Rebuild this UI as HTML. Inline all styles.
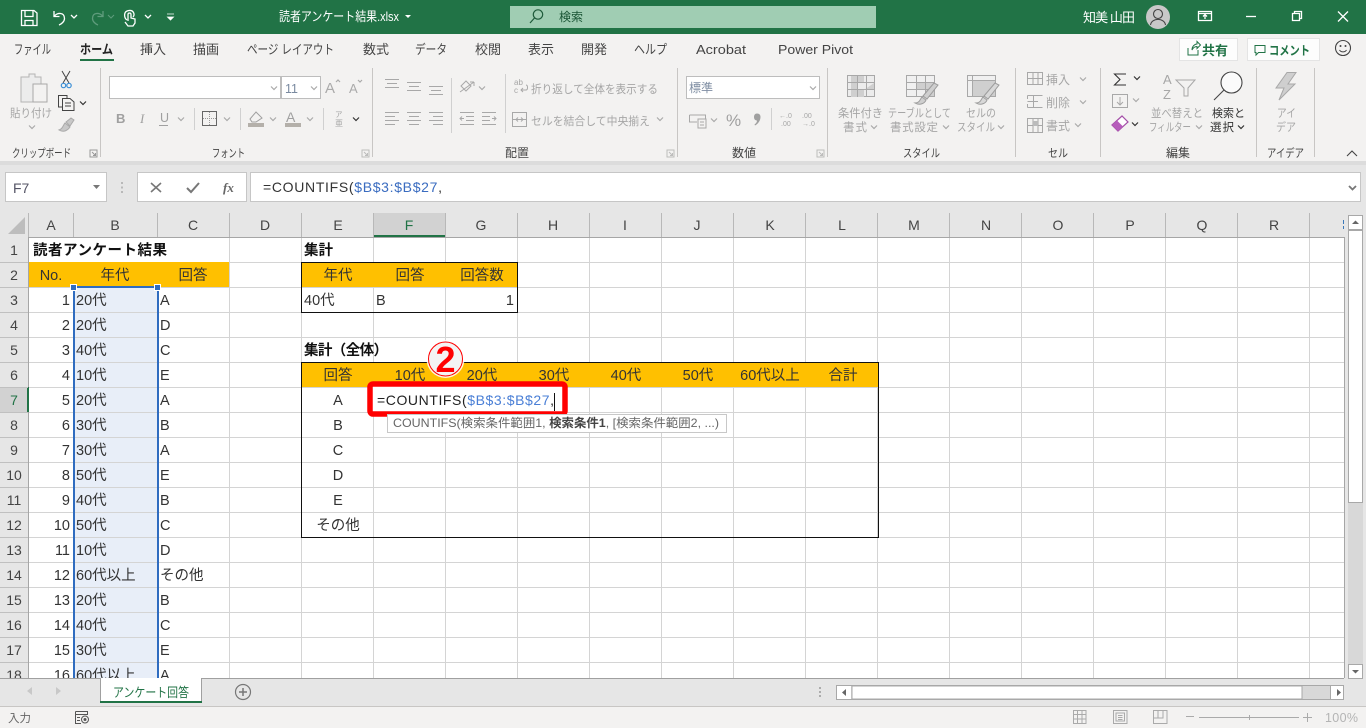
<!DOCTYPE html>
<html lang="ja"><head><meta charset="utf-8"><title>読者アンケート結果.xlsx - Excel</title>
<style>
html,body{margin:0;padding:0;background:#fff;overflow:hidden}
svg{display:block;font-family:"Liberation Sans","Noto Sans CJK JP",sans-serif}
.g{fill:#a6a6a6;font-size:11.5px}
.k{fill:#333;font-size:11.5px}
.tab{fill:#444;font-size:13px}
.lb{fill:#444;font-size:11.5px}
.c{fill:#333;font-size:14.5px}
.m{text-anchor:middle}
.e{text-anchor:end}
.b{font-weight:bold;fill:#111}
.h{fill:#444;font-size:14px;text-anchor:middle}
.i{fill:none;stroke:#a8a8a8;stroke-width:1}
.d{fill:none;stroke:#444;stroke-width:1}
.ch{fill:none;stroke:#aaa;stroke-width:1.2}
.chd{fill:none;stroke:#333;stroke-width:1.2}
.w{fill:none;stroke:#fff;stroke-width:1.3}
</style></head><body>
<svg width="1366" height="728" viewBox="0 0 1366 728" xmlns="http://www.w3.org/2000/svg">
<defs>
<path id="cv" class="ch" d="M-3-1.5 0 1.5 3-1.5"/>
<path id="cd" class="chd" d="M-3-1.5 0 1.5 3-1.5"/>
<path id="lau" d="M0 0H7V7H0ZM2 2 5.5 5.5M5.5 3V5.5H3" fill="none" stroke="#999" stroke-width="1"/>
</defs>
<!-- backgrounds -->
<rect width="1366" height="728" fill="#e6e6e6"/>
<rect y="34" width="1366" height="127" fill="#f3f2f1"/>
<rect y="161" width="1366" height="4" fill="#dcdcdc"/>
<rect width="1366" height="34" fill="#217346"/>

<!-- title bar -->
<path class="w" d="M21.5 10.5H34L37 13V25.5H21.5ZM25 10.5V16.5H33V10.5M25 25.5V20.5H33V25.5"/>
<path class="w" d="M54 11V16.5H59.5M54.5 16C57 12.5 64.5 12 64.5 18.5C64.5 21.5 61.5 24 59 25"/>
<path d="M71 15 74 18 77 15" class="w" stroke-width="1"/>
<path d="M103 11V16.5H97.5M102.5 16C100 12.5 92.5 12 92.5 18.5C92.5 21.5 95.5 24 98 25" fill="none" stroke="#5f9c7c" stroke-width="1.3"/>
<path d="M108 15 111 18 114 15" fill="none" stroke="#5f9c7c"/>
<path class="w" d="M127 20C124 18 123 11 129 10.5C134 10 135 15 133 17M128 21V14.5C128 12.5 131 12.5 131 14.5V18L135 19V23L133 26H128L125 22"/>
<path d="M145 15 148 18 151 15" class="w"/>
<path d="M167 14H174M167.5 17H173.5L170.5 20Z" fill="#fff" stroke="#fff" stroke-width=".8"/>
<text x="279" y="21" fill="#fff" font-size="13" textLength="120" lengthAdjust="spacingAndGlyphs">読者アンケート結果.xlsx</text>
<path d="M405 15H411L408 18Z" fill="#fff"/>
<rect x="510" y="6" width="366" height="22" fill="#a0cdb3"/>
<path d="M530 23 534.5 18" fill="none" stroke="#1e5a3a" stroke-width="1.2"/><circle cx="538" cy="14.5" r="4.7" fill="none" stroke="#1e5a3a" stroke-width="1.2"/>
<text x="559" y="21" fill="#1a5535" font-size="12">検索</text>
<text x="1083" y="22" fill="#fff" font-size="13" textLength="52">知美 山田</text>
<circle cx="1158" cy="17" r="12" fill="#c8c8c8"/>
<circle cx="1158" cy="14" r="4.5" fill="none" stroke="#444" stroke-width="1.1"/>
<path d="M1150.5 25C1151.5 17.5 1164.5 17.5 1165.5 25" fill="none" stroke="#444" stroke-width="1.1"/>
<path class="w" stroke-width="1" d="M1198.5 11.5H1211.5V20.5H1198.5ZM1198.5 13.5H1211.5M1205 19V15M1203 16.5 1205 14.5 1207 16.5"/>
<path class="w" d="M1246 16.5H1256"/>
<path class="w" stroke-width="1" d="M1292.5 13.5H1299.5V20.5H1292.5ZM1294.5 13.5V11.5H1301.5V18.5H1299.5"/>
<path class="w" d="M1338 11.5 1348 21.5M1348 11.5 1338 21.5"/>

<!-- tabs -->
<g class="tab">
<text x="14" y="54" textLength="37" lengthAdjust="spacingAndGlyphs">ファイル</text>
<text x="80" y="54" textLength="33" lengthAdjust="spacingAndGlyphs" font-weight="bold" fill="#222">ホーム</text>
<text x="140" y="54">挿入</text>
<text x="193" y="54">描画</text>
<text x="247" y="54" textLength="87" lengthAdjust="spacingAndGlyphs">ページ レイアウト</text>
<text x="363" y="54">数式</text>
<text x="415" y="54" textLength="32" lengthAdjust="spacingAndGlyphs">データ</text>
<text x="475" y="54">校閲</text>
<text x="528" y="54">表示</text>
<text x="581" y="54">開発</text>
<text x="634" y="54" textLength="33" lengthAdjust="spacingAndGlyphs">ヘルプ</text>
<text x="696" y="54" textLength="50" lengthAdjust="spacingAndGlyphs">Acrobat</text>
<text x="778" y="54" textLength="75" lengthAdjust="spacingAndGlyphs">Power Pivot</text>
</g>
<rect x="80" y="59" width="34" height="2" fill="#217346"/>

<!-- share / comment -->
<rect x="1179.5" y="38.5" width="58" height="22" fill="#fdfdfd" stroke="#e4e4e4"/>
<path d="M1188 48V55H1198V50M1192 50C1192 46 1195 44 1197 44V41.5L1200.5 45 1197 48.5V46.5C1195 46.5 1193 48 1192 50Z" fill="none" stroke="#217346"/>
<text x="1202" y="55" font-size="13" font-weight="bold" fill="#217346">共有</text>
<rect x="1247.5" y="38.5" width="72" height="22" fill="#fdfdfd" stroke="#e4e4e4"/>
<path d="M1255 45.5H1265V52.5H1258.5L1256 55V52.5H1255Z" fill="none" stroke="#217346"/>
<text x="1269" y="55" font-size="12.5" font-weight="bold" fill="#217346" textLength="41" lengthAdjust="spacingAndGlyphs">コメント</text>
<circle cx="1343" cy="48" r="7.5" fill="none" stroke="#444" stroke-width="1.1"/><circle cx="1340.5" cy="46" r="1" fill="#444"/><circle cx="1345.5" cy="46" r="1" fill="#444"/><path d="M1339.5 50C1341 52.5 1345 52.5 1346.5 50" fill="none" stroke="#444"/>

<!-- group separators -->
<path d="M100.5 68V157M372.5 68V157M677.5 68V157M827.5 68V157M1015.5 68V157M1100.5 68V157M1256.5 68V157M1314.5 68V157" stroke="#c8c6c4" fill="none"/>
<!-- group labels -->
<g class="lb">
<text x="12" y="157" textLength="59" lengthAdjust="spacingAndGlyphs">クリップボード</text>
<text x="212" y="157" textLength="33" lengthAdjust="spacingAndGlyphs">フォント</text>
<text x="505" y="157" font-size="12">配置</text>
<text x="732" y="157" font-size="12">数値</text>
<text x="903" y="157" textLength="37" lengthAdjust="spacingAndGlyphs">スタイル</text>
<text x="1048" y="157" textLength="20" lengthAdjust="spacingAndGlyphs">セル</text>
<text x="1166" y="157" font-size="12">編集</text>
<text x="1267" y="157" textLength="37" lengthAdjust="spacingAndGlyphs">アイデア</text>
</g>
<use href="#lau" x="90" y="150"/><use href="#lau" x="362" y="150" opacity=".6"/><use href="#lau" x="667" y="150" opacity=".6"/><use href="#lau" x="817" y="150" opacity=".6"/>
<path d="M1347 156 1352 151 1357 156" fill="none" stroke="#444" stroke-width="1.1"/>

<!-- clipboard -->
<path d="M21 77H29V74H35V77H41V102H21Z" fill="#ececec" stroke="#b4b4b4"/><rect x="33" y="84" width="14" height="18" fill="#f3f2f1" stroke="#a8a8a8"/>
<text class="g" x="10" y="117" textLength="42" lengthAdjust="spacingAndGlyphs">貼り付け</text>
<use href="#cv" x="32" y="127"/>
<path d="M62 71 69 83M70 71 63 83" stroke="#444" fill="none"/><circle cx="63.5" cy="85.5" r="2.2" fill="none" stroke="#3c8fd6" stroke-width="1.2"/><circle cx="69" cy="85.5" r="2.2" fill="none" stroke="#3c8fd6" stroke-width="1.2"/>
<path class="d" d="M62 107H58.5V95.5H67V98M62.5 98.5H70L74 102V110.5H62.5ZM65 103H71M65 106H71"/>
<use href="#cd" x="83" y="103"/>
<path d="M59 130C63 129 63 125 65 123L70 127C68 130 64 133 59 130ZM66 122 71 118 74 120 70 126Z" fill="#c8c8c8" stroke="#aaa"/>

<!-- font -->
<rect x="109.5" y="76.5" width="171" height="22" fill="#fff" stroke="#bdbdbd"/>
<rect x="281.5" y="76.5" width="39" height="22" fill="#fff" stroke="#bdbdbd"/>
<use href="#cv" x="274" y="88"/><use href="#cv" x="314" y="88"/>
<text x="285" y="93" font-size="12.5" fill="#7a8aa0">11</text>
<text x="325" y="93" font-size="15" fill="#aaa">A</text><path d="M336 82 338 80 340 82" class="ch" stroke-width="1"/>
<text x="349" y="93" font-size="13" fill="#aaa">A</text><path d="M358 80 360 82 362 80" class="ch" stroke-width="1"/>
<text x="116" y="123" font-size="13" font-weight="bold" fill="#a0a0a0">B</text>
<text x="140" y="123" font-size="13" font-style="italic" font-family="Liberation Serif" fill="#a0a0a0">I</text>
<text x="160" y="122" font-size="12.5" fill="#a0a0a0">U</text><path d="M159 125.5H168" stroke="#a0a0a0"/>
<use href="#cv" x="181" y="119"/>
<path d="M194.5 108V130M240.5 108V130M323.5 108V130M451.5 78V133M505.5 74V133M771.5 108V130" stroke="#d0d0d0"/>
<rect x="202.5" y="111.5" width="14" height="14" fill="none" stroke="#666"/><path d="M209.5 112V125M203 118.5H216" stroke="#999" stroke-dasharray="1 1"/>
<use href="#cv" x="227" y="119"/>
<path d="M250 119 256 112 262 118 256 122H252Z" fill="none" stroke="#a0a0a0"/><rect x="248" y="123" width="16" height="4" fill="#b4b0aa"/>
<use href="#cv" x="273" y="119"/>
<text x="286" y="122" font-size="14" fill="#a0a0a0">A</text><rect x="285" y="123" width="16" height="4" fill="#b4b0aa"/>
<use href="#cv" x="310" y="119"/>
<text x="335" y="117" font-size="7.5" fill="#a6a6a6">ア</text><text x="335" y="126" font-size="8" fill="#a6a6a6">亜</text>
<use href="#cd" x="356" y="119"/>

<!-- alignment -->
<path class="i" d="M385 79.5H399M387 83.5H397M385 87.5H399M407 82.5H421M409 86.5H419M407 90.5H421M429 86.5H443M431 90.5H441M429 94.5H443"/>
<path class="i" d="M385 112.5H399M385 116.5H395M385 120.5H399M385 124.5H395M407 112.5H421M409 116.5H419M407 120.5H421M409 124.5H419M429 112.5H443M433 116.5H443M429 120.5H443M433 124.5H443"/>
<path class="i" d="M460 92 474 82M461 86 466 81 471 86 466 91ZM474 82V86M474 82H470"/><use href="#cv" x="482" y="88"/>
<path class="i" d="M460 112.5H474M466 116.5H474M466 120.5H474M460 124.5H474M464 118.5H460M462 116.5 460 118.5 462 120.5"/>
<path class="i" d="M482 112.5H496M482 116.5H490M482 120.5H490M482 124.5H496M492 118.5H496M494 116.5 496 118.5 494 120.5" />
<text x="514" y="85" font-size="8" fill="#a6a6a6">ab</text><text x="514" y="93" font-size="8" fill="#a6a6a6">c</text><path class="i" d="M521 90H526C528 90 528 85 526 85M523 88 521 90 523 92"/>
<text class="g" x="531" y="93" textLength="127" lengthAdjust="spacingAndGlyphs">折り返して全体を表示する</text>
<rect class="i" x="512.5" y="112.5" width="14" height="14"/><path class="i" d="M513 119.5H526M516 119.5 518 117.5M516 119.5 518 121.5M523 119.5 521 117.5M523 119.5 521 121.5"/>
<text class="g" x="531" y="125" textLength="119" lengthAdjust="spacingAndGlyphs">セルを結合して中央揃え</text>
<use href="#cv" x="660" y="119"/>

<!-- number -->
<rect x="686.5" y="76.5" width="133" height="22" fill="#fff" stroke="#bdbdbd"/>
<text x="689" y="92" font-size="12" fill="#7f8ea3">標準</text>
<use href="#cv" x="813" y="88"/>
<path class="i" d="M689.5 115H705.5V119M689.5 115V122H697M698 119H706V128H698ZM700 122H704M700 125H704"/>
<use href="#cv" x="714" y="120"/>
<text x="726" y="126" font-size="17" fill="#a0a0a0">%</text>
<path d="M757 113.5C759.5 113.5 760.5 115 760.5 117C760.5 120.5 758 124 755 125.5L754.5 124.5C756 123.5 757 122 757 120.5C755.5 120.5 754 119.5 754 117C754 115 755 113.5 757 113.5Z" fill="#a0a0a0"/>
<text x="779" y="118" font-size="7" fill="#a6a6a6">←.0</text><text x="781" y="126" font-size="7" fill="#a6a6a6">.00</text>
<text x="802" y="118" font-size="7" fill="#a6a6a6">.00</text><text x="802" y="126" font-size="7" fill="#a6a6a6">→.0</text>

<!-- styles -->
<rect x="847.5" y="75.5" width="27" height="21" fill="#ececec" stroke="#a8a8a8"/>
<path d="M851 76H864V83H851ZM864 83H858V90H851V83M864 90H874V83M858 90H864V97H851V90" fill="#cfcfcf"/>
<path class="i" d="M848 82.5H874M848 89.5H874M857.5 76V97M866.5 76V97"/>
<rect x="906.5" y="75.5" width="28" height="21" fill="#f0f0f0" stroke="#a8a8a8"/><rect x="916" y="83" width="18" height="7" fill="#cfcfcf"/><rect x="925" y="83" width="9" height="13" fill="#cfcfcf"/>
<path class="i" d="M907 82.5H934M907 89.5H934M916.5 76V97M925.5 76V97"/>
<path d="M915 103C920 103 920 99 922 97L926 100C925 103 920 106 915 103ZM923 96 934 83 938 85 927 99Z" fill="#cfcfcf" stroke="#9c9c9c"/>
<rect x="967.5" y="75.5" width="28" height="21" fill="#f0f0f0" stroke="#a8a8a8"/><rect x="972" y="81" width="23" height="15" fill="#cfcfcf"/>
<path class="i" d="M968 80.5H995M972.5 76V96"/>
<path d="M976 103C981 103 981 99 983 97L987 100C986 103 981 106 976 103ZM984 96 995 83 999 85 988 99Z" fill="#d8d8d8" stroke="#9c9c9c"/>
<g class="g">
<text x="838" y="117" textLength="45" lengthAdjust="spacingAndGlyphs">条件付き</text>
<text x="843" y="131" textLength="24">書式</text>
<text x="888" y="117" textLength="63" lengthAdjust="spacingAndGlyphs">テーブルとして</text>
<text x="890" y="131" textLength="48">書式設定</text>
<text x="966" y="117" textLength="30" lengthAdjust="spacingAndGlyphs">セルの</text>
<text x="957" y="131" textLength="38" lengthAdjust="spacingAndGlyphs">スタイル</text>
</g>
<use href="#cv" x="874" y="127"/><use href="#cv" x="946" y="127"/><use href="#cv" x="1001" y="127"/>

<!-- cells -->
<rect class="i" x="1027.5" y="72.5" width="15" height="12"/><path class="i" d="M1033 72V85M1038 72V85M1027 78.5H1043"/>
<path class="i" d="M1027.5 95.5H1042.5M1027.5 107.5H1042.5M1033.5 95V108M1027.5 95.5V99M1027.5 104V107.5M1027.5 101.5H1038"/>
<rect class="i" x="1027.5" y="118.5" width="15" height="14"/><path class="i" d="M1033 119V132M1038 119V132M1028 125.5H1042"/><rect x="1033" y="121" width="5" height="5" fill="#bbb"/>
<g class="g" font-size="12">
<text x="1046" y="84" font-size="12">挿入</text><text x="1046" y="107" font-size="12">削除</text><text x="1046" y="130" font-size="12">書式</text>
</g>
<use href="#cv" x="1083" y="79"/><use href="#cv" x="1083" y="102"/><use href="#cv" x="1078" y="125"/>

<!-- editing -->
<path d="M1126 74H1114.5L1120 79.5 1114.5 85H1126" fill="none" stroke="#333" stroke-width="1.1"/><use href="#cd" x="1137" y="78"/>
<rect class="i" x="1112.5" y="94.5" width="15" height="13"/><path class="i" d="M1120 97V105M1117 102 1120 105 1123 102"/><use href="#cv" x="1136" y="100"/>
<path d="M1112 125 1122 116 1128 122 1118 131Z" fill="#fff" stroke="#a44ea8" stroke-width="1.2"/><path d="M1112 125 1117 120.5 1123 126.5 1118 131Z" fill="#b65dbb"/><use href="#cd" x="1135" y="124"/>
<text x="1163" y="84" font-size="13" fill="#a6a6a6">A</text><text x="1163" y="99" font-size="13" fill="#a6a6a6">Z</text>
<path class="i" d="M1176 80H1195L1188 88V96H1184V88Z" stroke-width="1.2"/>
<text class="g" x="1151" y="117" textLength="52" lengthAdjust="spacingAndGlyphs">並べ替えと</text>
<text class="g" x="1149" y="131" textLength="42" lengthAdjust="spacingAndGlyphs">フィルター</text><use href="#cv" x="1199" y="127"/>
<circle cx="1231.5" cy="82.5" r="10.5" fill="#fbfbfb" stroke="#444" stroke-width="1.1"/><path d="M1214 100 1224 90" stroke="#444" stroke-width="1.1"/>
<text class="k" x="1212" y="117" textLength="33" lengthAdjust="spacingAndGlyphs">検索と</text>
<text class="k" x="1210" y="131" textLength="24">選択</text><use href="#cd" x="1241" y="127"/>

<!-- ideas -->
<path d="M1287 72.5H1296L1288 84H1295L1279 100 1284 88H1276Z" fill="#cfcfcf" stroke="#a8a8a8"/>
<text class="g" x="1277" y="117" textLength="19" lengthAdjust="spacingAndGlyphs">アイ</text>
<text class="g" x="1276" y="131" textLength="20" lengthAdjust="spacingAndGlyphs">デア</text>

<!-- formula bar -->
<rect x="5.5" y="172.5" width="101" height="29" fill="#fff" stroke="#c6c6c6"/>
<text x="13" y="193" font-size="14" fill="#556">F7</text>
<path d="M93 185H100L96.5 189Z" fill="#777"/>
<path d="M122 182V184M122 186.5V188.5M122 191V193" stroke="#aaa" stroke-width="1.5"/>
<rect x="137.5" y="172.5" width="109" height="29" fill="#fff" stroke="#c6c6c6"/>
<path d="M151 183 161 192M161 183 151 192" stroke="#777" stroke-width="1.6" fill="none"/>
<path d="M187 188 191 192 199 183" stroke="#777" stroke-width="2" fill="none"/>
<text x="223" y="192" font-size="13" font-style="italic" font-weight="bold" font-family="Liberation Serif" fill="#666">fx</text>
<rect x="250.5" y="172.5" width="1110" height="29" fill="#fff" stroke="#c6c6c6"/>
<text x="263" y="192" font-size="14" fill="#333" textLength="179">=COUNTIFS(<tspan fill="#3a6cc0">$B$3:$B$27</tspan>,</text>
<path d="M1349 186 1352.5 189.5 1356 186" fill="none" stroke="#777" stroke-width="1.8"/>

<!-- column headers -->
<rect x="373" y="213" width="73" height="24" fill="#d2d2d2"/>
<rect x="373" y="235" width="73" height="2" fill="#217346"/>
<path d="M8 234H25V217Z" fill="#bdbdbd"/>
<path d="M28.5 213V237M73.5 213V237M157.5 213V237M229.5 213V237M301.5 213V237M373.5 213V237M445.5 213V237M517.5 213V237M589.5 213V237M661.5 213V237M733.5 213V237M805.5 213V237M877.5 213V237M949.5 213V237M1021.5 213V237M1093.5 213V237M1165.5 213V237M1237.5 213V237M1309.5 213V237" stroke="#b8b8b8"/>
<g class="h">
<text x="51" y="230">A</text><text x="115" y="230">B</text><text x="193" y="230">C</text><text x="265" y="230">D</text><text x="338" y="230">E</text><text x="409" y="230" fill="#217346">F</text><text x="481" y="230">G</text><text x="553" y="230">H</text><text x="625" y="230">I</text><text x="697" y="230">J</text><text x="770" y="230">K</text><text x="842" y="230">L</text><text x="914" y="230">M</text><text x="986" y="230">N</text><text x="1058" y="230">O</text><text x="1130" y="230">P</text><text x="1202" y="230">Q</text><text x="1274" y="230">R</text>
</g>
<path d="M1343.5 220V224M1343.5 226V229" stroke="#3b78b8" stroke-width="1"/>

<!-- sheet -->
<rect x="28" y="237" width="1316" height="441" fill="#fff"/>
<rect x="75" y="288" width="82" height="390" fill="#e8eef8"/>
<path d="M0 262.5H1344M0 287.5H1344M0 312.5H1344M0 337.5H1344M0 362.5H1344M0 387.5H1344M0 412.5H1344M0 437.5H1344M0 462.5H1344M0 487.5H1344M0 512.5H1344M0 537.5H1344M0 562.5H1344M0 587.5H1344M0 612.5H1344M0 637.5H1344M0 662.5H1344" stroke="#d4d4d4"/>
<path d="M229.5 237V678M301.5 237V678M373.5 237V678M445.5 237V678M517.5 237V678M589.5 237V678M661.5 237V678M733.5 237V678M805.5 237V678M877.5 237V678M949.5 237V678M1021.5 237V678M1093.5 237V678M1165.5 237V678M1237.5 237V678M1309.5 237V678" stroke="#d4d4d4"/>
<path d="M73.5 287V678M157.5 287V678" stroke="#d4d4d4"/>
<rect x="28" y="262" width="201" height="25" fill="#ffc000"/>
<rect x="302" y="263" width="215" height="24" fill="#ffc000"/>
<rect x="302" y="363" width="576" height="24" fill="#ffc000"/>
<path d="M28.5 237V678M0 237.5H1344M1344.5 237V678" stroke="#a6a6a6"/>
<!-- row header column -->
<rect x="0" y="237" width="28" height="441" fill="#e6e6e6"/>
<rect x="0" y="387" width="28" height="25" fill="#d2d2d2"/>
<rect x="27" y="387" width="2" height="25" fill="#217346"/>
<path d="M0 262.5H28M0 287.5H28M0 312.5H28M0 337.5H28M0 362.5H28M0 387.5H28M0 412.5H28M0 437.5H28M0 462.5H28M0 487.5H28M0 512.5H28M0 537.5H28M0 562.5H28M0 587.5H28M0 612.5H28M0 637.5H28M0 662.5H28" stroke="#c0c0c0"/>
<g class="h">
<text x="14" y="255">1</text><text x="14" y="280">2</text><text x="14" y="305">3</text><text x="14" y="330">4</text><text x="14" y="355">5</text><text x="14" y="380">6</text><text x="14" y="405" fill="#217346">7</text><text x="14" y="430">8</text><text x="14" y="455">9</text><text x="14" y="480">10</text><text x="14" y="505">11</text><text x="14" y="530">12</text><text x="14" y="555">13</text><text x="14" y="580">14</text><text x="14" y="605">15</text><text x="14" y="630">16</text><text x="14" y="655">17</text><text x="14" y="680">18</text>
</g>

<!-- table text -->
<text class="c b" x="33" y="255" textLength="134" font-size="14.5">読者アンケート結果</text>
<g class="c"><text class="m" x="51" y="280">No.</text><text class="m" x="115" y="280">年代</text><text class="m" x="193" y="280">回答</text></g>
<g class="c e">
<text x="70" y="305">1</text><text x="70" y="330">2</text><text x="70" y="355">3</text><text x="70" y="380">4</text><text x="70" y="405">5</text><text x="70" y="430">6</text><text x="70" y="455">7</text><text x="70" y="480">8</text><text x="70" y="505">9</text><text x="70" y="530">10</text><text x="70" y="555">11</text><text x="70" y="580">12</text><text x="70" y="605">13</text><text x="70" y="630">14</text><text x="70" y="655">15</text><text x="70" y="680">16</text>
</g>
<g class="c">
<text x="76" y="305">20代</text><text x="76" y="330">20代</text><text x="76" y="355">40代</text><text x="76" y="380">10代</text><text x="76" y="405">20代</text><text x="76" y="430">30代</text><text x="76" y="455">30代</text><text x="76" y="480">50代</text><text x="76" y="505">40代</text><text x="76" y="530">50代</text><text x="76" y="555">10代</text><text x="76" y="580">60代以上</text><text x="76" y="605">20代</text><text x="76" y="630">40代</text><text x="76" y="655">30代</text><text x="76" y="680">60代以上</text>
<text x="160" y="305">A</text><text x="160" y="330">D</text><text x="160" y="355">C</text><text x="160" y="380">E</text><text x="160" y="405">A</text><text x="160" y="430">B</text><text x="160" y="455">A</text><text x="160" y="480">E</text><text x="160" y="505">B</text><text x="160" y="530">C</text><text x="160" y="555">D</text><text x="160" y="580">その他</text><text x="160" y="605">B</text><text x="160" y="630">C</text><text x="160" y="655">E</text><text x="160" y="680">A</text>
</g>
<!-- selection -->
<rect x="73" y="286" width="86" height="2" fill="#2f6cc0"/>
<rect x="73" y="286" width="2" height="392" fill="#2f6cc0"/>
<rect x="157" y="286" width="2" height="392" fill="#2f6cc0"/>
<rect x="70.5" y="284.5" width="6" height="6" fill="#2f6cc0" stroke="#fff"/>
<rect x="154.5" y="284.5" width="6" height="6" fill="#2f6cc0" stroke="#fff"/>

<!-- summary tables -->
<text class="c b" x="304" y="255" font-size="14.5">集計</text>
<g class="c m"><text x="338" y="280">年代</text><text x="410" y="280">回答</text><text x="482" y="280">回答数</text></g>
<g class="c"><text x="304" y="305">40代</text><text x="376" y="305">B</text><text class="e" x="514" y="305">1</text></g>
<rect x="301.5" y="262.5" width="216" height="50" fill="none" stroke="#111"/>
<text class="c b" x="304" y="355" textLength="84" font-size="14.5">集計（全体）</text>
<g class="c m"><text x="338" y="380">回答</text><text x="410" y="380">10代</text><text x="482" y="380">20代</text><text x="554" y="380">30代</text><text x="626" y="380">40代</text><text x="698" y="380">50代</text><text x="770" y="380">60代以上</text><text x="843" y="380">合計</text>
<text x="338" y="405">A</text><text x="338" y="430">B</text><text x="338" y="455">C</text><text x="338" y="480">D</text><text x="338" y="505">E</text><text x="338" y="530">その他</text></g>
<rect x="301.5" y="362.5" width="577" height="175" fill="none" stroke="#111"/>

<!-- active cell + red box -->
<rect x="370" y="384" width="195" height="30" rx="3" fill="#fff" stroke="#f00" stroke-width="5.5"/>
<text x="377" y="405" font-size="14" fill="#222" textLength="177">=COUNTIFS(<tspan fill="#4a7fd6">$B$3:$B$27</tspan>,</text>
<path d="M554.5 393V411" stroke="#111"/>
<!-- tooltip -->
<rect x="387.5" y="414.5" width="339" height="18" fill="#fff" stroke="#c8c8c8"/>
<text x="393" y="427" font-size="12" fill="#666" textLength="326" lengthAdjust="spacingAndGlyphs">COUNTIFS(検索条件範囲1, <tspan font-weight="bold" fill="#444">検索条件1</tspan>, [検索条件範囲2, ...)</text>
<!-- circled 2 -->
<circle cx="445.5" cy="359" r="19" fill="#fff" opacity=".85"/>
<circle cx="445.5" cy="359" r="17" fill="#f4f4f4" stroke="#f00" stroke-width="1"/>
<text x="445.5" y="372" text-anchor="middle" font-size="36" font-weight="bold" fill="#f00">2</text>

<!-- sheet bar -->
<rect y="678" width="1366" height="28" fill="#e6e6e6"/>
<path d="M0 678.5H1344" stroke="#a0a0a0"/>
<path d="M32 687V695L27 691ZM56 687V695L61 691Z" fill="#c8c8c8"/>
<rect x="100" y="678" width="102" height="24" fill="#fff"/>
<path d="M100.5 678V702M201.5 678V702" stroke="#a0a0a0"/>
<rect x="100" y="701" width="102" height="2" fill="#217346"/>
<text x="113" y="697" font-size="13" fill="#217346" textLength="76" lengthAdjust="spacingAndGlyphs">アンケート回答</text>
<circle cx="243" cy="692" r="7.5" fill="none" stroke="#777" stroke-width="1.2"/><path d="M239 692H247M243 688V696" stroke="#777" stroke-width="1.5"/>
<path d="M820 691V693M820 695V697M820 687V689" stroke="#999" stroke-width="1.5"/>
<rect x="836.5" y="685.5" width="507" height="14" fill="#d8d8d8" stroke="#a8a8a8"/>
<rect x="837" y="686" width="14" height="13" fill="#fff"/><rect x="852" y="686" width="450" height="13" fill="#fff" stroke="#a8a8a8"/><rect x="1330.5" y="685.5" width="13" height="14" fill="#fff" stroke="#a8a8a8"/>
<path d="M846 689V696L842 692.5ZM1337 689V696L1341 692.5Z" fill="#666"/>

<!-- v scrollbar -->
<rect x="1345" y="213" width="21" height="493" fill="#e6e6e6"/>
<rect x="1348" y="215" width="15" height="463" fill="#d8d8d8"/>
<rect x="1348.5" y="215.5" width="14" height="14" fill="#fff" stroke="#a8a8a8"/>
<path d="M1352 224H1359L1355.5 220.5Z" fill="#666"/>
<rect x="1348.5" y="230.5" width="14" height="272" fill="#fff" stroke="#a8a8a8"/>
<rect x="1348.5" y="664.5" width="14" height="14" fill="#fff" stroke="#a8a8a8"/>
<path d="M1352 670H1359L1355.5 673.5Z" fill="#666"/>

<!-- status bar -->
<rect y="706" width="1366" height="22" fill="#f3f2f1"/>
<path d="M0 706.5H1366" stroke="#c8c6c4"/>
<text x="8" y="722" font-size="11.5" fill="#666">入力</text>
<path d="M75.5 711.5H87.5V715M75.5 711.5V723.5H81M75.5 714.5H87.5M77 717.5H80M77 720.5H80" fill="none" stroke="#555"/><circle cx="85" cy="719.5" r="3.5" fill="none" stroke="#555"/><circle cx="85" cy="719.5" r="1.5" fill="#555"/>
<path d="M1073.5 710.5H1086V723.5H1073.5ZM1073.5 714.5H1086M1073.5 719H1086M1077.5 710.5V723.5M1082 710.5V723.5" fill="none" stroke="#aaa"/>
<path d="M1113.5 710.5H1127V723.5H1113.5ZM1116 713H1124.5V721H1116ZM1118 715.5H1122.5M1118 717.5H1122.5M1118 719.5H1122.5" fill="none" stroke="#aaa"/>
<path d="M1153.5 710.5H1167V723.5H1153.5ZM1153.5 718H1163V710.5M1158 710.5V718" fill="none" stroke="#aaa"/>
<path d="M1186 716.5H1194M1303 717.5H1312M1307.5 713V722M1199 717.5H1299M1249.5 715V720" stroke="#aaa" fill="none"/>
<text x="1325" y="722" font-size="12.5" fill="#b4b4b4" textLength="33">100%</text>
</svg>
</body></html>
